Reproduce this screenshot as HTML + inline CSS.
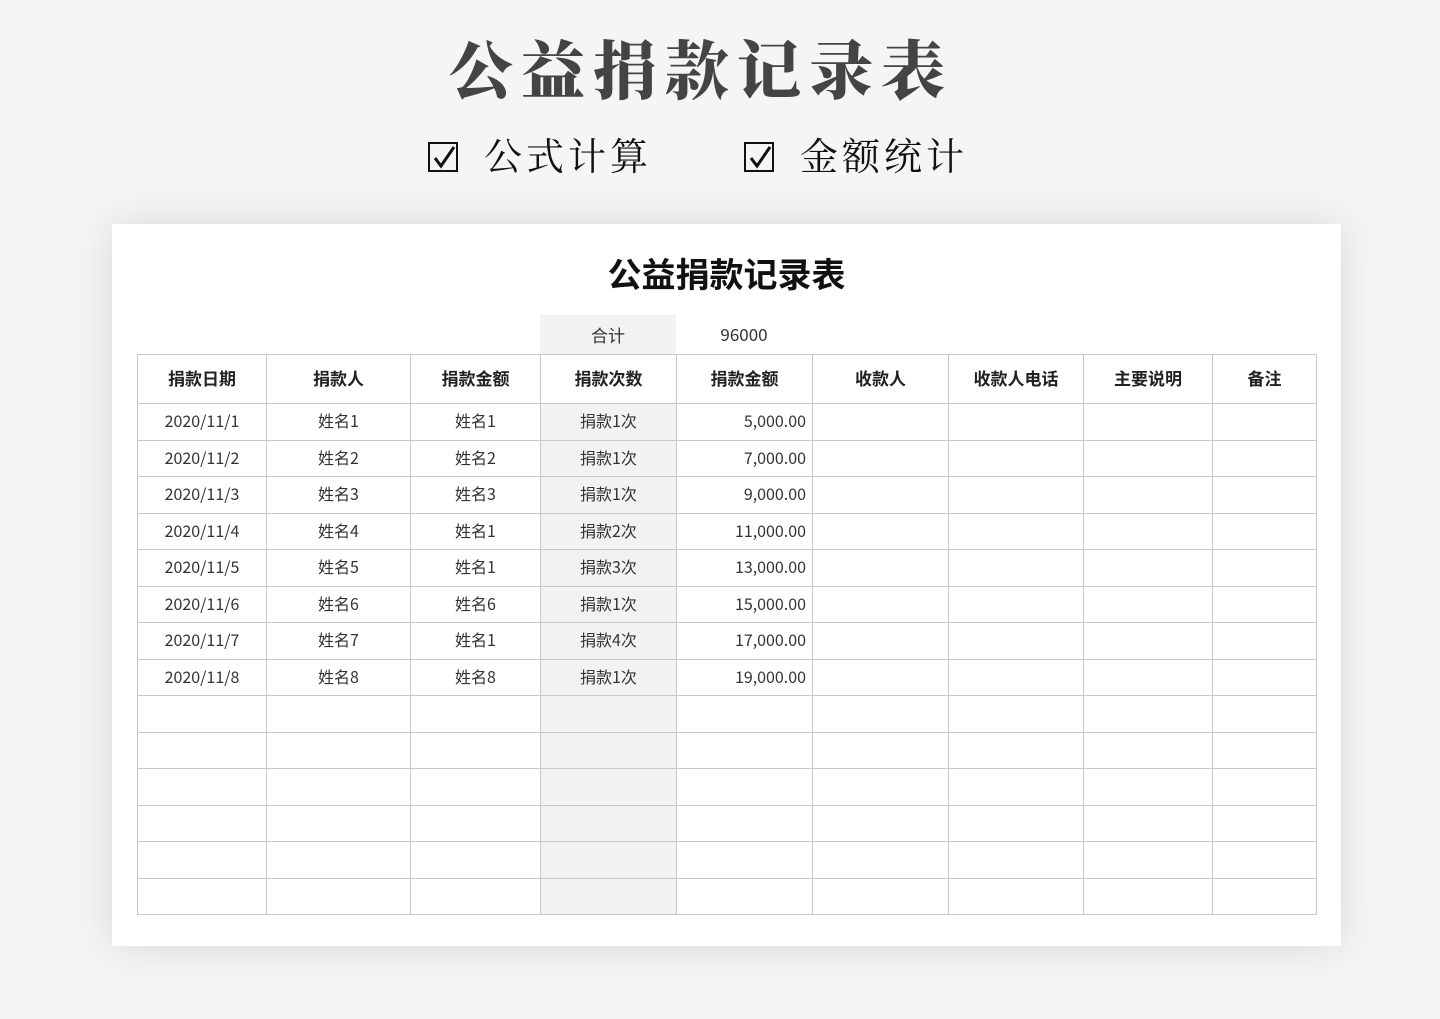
<!DOCTYPE html>
<html><head><meta charset="utf-8">
<style>
*{margin:0;padding:0;box-sizing:border-box}
body{width:1440px;height:1019px;background:#f5f5f5;position:relative;overflow:hidden;font-family:"Liberation Sans","Noto Sans CJK SC",sans-serif;color:#222}
.t1{position:absolute;left:449px;top:21px;font-family:"Liberation Serif","Noto Serif CJK SC",serif;font-weight:900;font-size:64px;letter-spacing:8px;color:#444;white-space:nowrap}
.t2{position:absolute;top:126px;font-family:"Liberation Serif","Noto Serif CJK SC",serif;font-size:38px;letter-spacing:4px;color:#111;white-space:nowrap}
.t2 .b{display:inline-block;width:30px;height:30px;border:2.5px solid #111;position:relative;vertical-align:-2px;margin-right:26px}
.t2 .b svg{position:absolute;left:2px;top:1px}
.card{position:absolute;left:112px;top:224px;width:1229px;height:722px;background:#fff;box-shadow:0 0 40px rgba(0,0,0,0.12)}
.ct{position:absolute;width:1229px;top:248px;text-align:center;font-size:34px;font-weight:bold;color:#111;font-family:"Noto Sans CJK SC",sans-serif;line-height:50px}
table{position:absolute;left:137px;top:354px;border-collapse:collapse;table-layout:fixed;font-family:"Noto Sans CJK SC",sans-serif}
td{border:1px solid #c8c8c8;height:36.5px;text-align:center;font-size:16px;color:#333;padding:0 0 3px 0;line-height:20px}
tr.h td{height:49px;font-weight:bold;font-size:17px;color:#222}
td.g{background:#f2f2f2}
td.r{text-align:right;padding-right:6px}
.sum{position:absolute;top:314px;height:39px;line-height:39px;font-size:17px;text-align:center;color:#333;font-family:"Noto Sans CJK SC",sans-serif}
</style></head><body>
<div class="t1">公益捐款记录表</div>
<div class="t2" style="left:428px"><span class="b"><svg width="24" height="24" viewBox="0 0 24 24"><path d="M3 13 L9 21 L22 2" fill="none" stroke="#111" stroke-width="3"/></svg></span>公式计算</div>
<div class="t2" style="left:744px"><span class="b"><svg width="24" height="24" viewBox="0 0 24 24"><path d="M3 13 L9 21 L22 2" fill="none" stroke="#111" stroke-width="3"/></svg></span>金额统计</div>
<div class="card"></div>
<div class="ct" style="left:112px">公益捐款记录表</div>
<div class="sum" style="left:540px;width:136px;background:#f2f2f2;top:315px">合计</div>
<div class="sum" style="left:676px;width:136px">96000</div>
<table>
<colgroup><col style="width:129px"><col style="width:144px"><col style="width:130px"><col style="width:136px"><col style="width:136px"><col style="width:136px"><col style="width:135px"><col style="width:129px"><col style="width:104px"></colgroup>
<tr class="h"><td>捐款日期</td><td>捐款人</td><td>捐款金额</td><td>捐款次数</td><td>捐款金额</td><td>收款人</td><td>收款人电话</td><td>主要说明</td><td>备注</td></tr>
<tr><td>2020/11/1</td><td>姓名1</td><td>姓名1</td><td class="g">捐款1次</td><td class="r">5,000.00</td><td></td><td></td><td></td><td></td></tr>
<tr><td>2020/11/2</td><td>姓名2</td><td>姓名2</td><td class="g">捐款1次</td><td class="r">7,000.00</td><td></td><td></td><td></td><td></td></tr>
<tr><td>2020/11/3</td><td>姓名3</td><td>姓名3</td><td class="g">捐款1次</td><td class="r">9,000.00</td><td></td><td></td><td></td><td></td></tr>
<tr><td>2020/11/4</td><td>姓名4</td><td>姓名1</td><td class="g">捐款2次</td><td class="r">11,000.00</td><td></td><td></td><td></td><td></td></tr>
<tr><td>2020/11/5</td><td>姓名5</td><td>姓名1</td><td class="g">捐款3次</td><td class="r">13,000.00</td><td></td><td></td><td></td><td></td></tr>
<tr><td>2020/11/6</td><td>姓名6</td><td>姓名6</td><td class="g">捐款1次</td><td class="r">15,000.00</td><td></td><td></td><td></td><td></td></tr>
<tr><td>2020/11/7</td><td>姓名7</td><td>姓名1</td><td class="g">捐款4次</td><td class="r">17,000.00</td><td></td><td></td><td></td><td></td></tr>
<tr><td>2020/11/8</td><td>姓名8</td><td>姓名8</td><td class="g">捐款1次</td><td class="r">19,000.00</td><td></td><td></td><td></td><td></td></tr>
<tr><td></td><td></td><td></td><td class="g"></td><td></td><td></td><td></td><td></td><td></td></tr>
<tr><td></td><td></td><td></td><td class="g"></td><td></td><td></td><td></td><td></td><td></td></tr>
<tr><td></td><td></td><td></td><td class="g"></td><td></td><td></td><td></td><td></td><td></td></tr>
<tr><td></td><td></td><td></td><td class="g"></td><td></td><td></td><td></td><td></td><td></td></tr>
<tr><td></td><td></td><td></td><td class="g"></td><td></td><td></td><td></td><td></td><td></td></tr>
<tr><td></td><td></td><td></td><td class="g"></td><td></td><td></td><td></td><td></td><td></td></tr>
</table>
</body></html>
